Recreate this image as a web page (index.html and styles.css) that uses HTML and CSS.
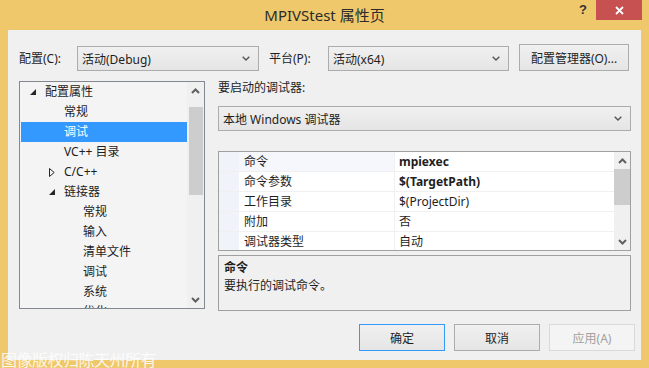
FILE: index.html
```html
<!DOCTYPE html>
<html lang="zh-CN">
<head>
    <meta charset="UTF-8">
    <title>MPIVStest 属性页</title>
    <link rel="stylesheet" href="styles.css">
</head>
<body>
    <div class="window">
        <!-- Title bar -->
        <div class="titlebar">
            <div></div>
            <div class="title">MPIVStest 属性页</div>
            <div class="caption-buttons">
                <span class="help">?</span>
                <span class="close">
                    <svg width="9" height="9" viewBox="0 0 9 9"><path d="M1 1L8 8M8 1L1 8" stroke="#fff" stroke-width="1.8"/></svg>
                </span>
            </div>
        </div>

        <div class="dialog">
            <!-- Configuration row -->
            <div class="config-row">
                <span class="label label-config">配置(C):</span>
                <div class="combo combo-config">
                    <span>活动(Debug)</span>
                    <svg class="chevron" width="8" height="5" viewBox="0 0 8 5"><polyline points="0.7,0.7 4,4 7.3,0.7" fill="none" stroke="#555" stroke-width="1.4"/></svg>
                </div>
                <span class="label label-platform">平台(P):</span>
                <div class="combo combo-platform">
                    <span>活动(x64)</span>
                    <svg class="chevron" width="8" height="5" viewBox="0 0 8 5"><polyline points="0.7,0.7 4,4 7.3,0.7" fill="none" stroke="#555" stroke-width="1.4"/></svg>
                </div>
                <button class="button button-manager">配置管理器(O)...</button>
            </div>

            <div class="main">
                <!-- Tree -->
                <div class="tree">
                    <div class="tree-list">
                        <div class="node level-1">
                            <span class="expander"><svg width="6" height="6" viewBox="0 0 6 6"><polygon points="6,0 6,6 0,6" fill="#262626"/></svg></span>
                            配置属性
                        </div>
                        <div class="node level-2"><span class="expander"></span>常规</div>
                        <div class="node level-2 selected"><span class="expander"></span>调试</div>
                        <div class="node level-2"><span class="expander"></span>VC++ 目录</div>
                        <div class="node level-2">
                            <span class="expander"><svg width="6" height="9" viewBox="0 0 6 9"><polygon points="0.5,0.5 5.2,4.5 0.5,8.5" fill="none" stroke="#262626" stroke-width="1"/></svg></span>
                            C/C++
                        </div>
                        <div class="node level-2">
                            <span class="expander"><svg width="6" height="6" viewBox="0 0 6 6"><polygon points="6,0 6,6 0,6" fill="#262626"/></svg></span>
                            链接器
                        </div>
                        <div class="node level-3"><span class="expander"></span>常规</div>
                        <div class="node level-3"><span class="expander"></span>输入</div>
                        <div class="node level-3"><span class="expander"></span>清单文件</div>
                        <div class="node level-3"><span class="expander"></span>调试</div>
                        <div class="node level-3"><span class="expander"></span>系统</div>
                        <div class="node level-3"><span class="expander"></span>优化</div>
                    </div>
                    <div class="scrollbar tree-scroll">
                        <span class="arrow"><svg width="9" height="6" viewBox="0 0 9 6"><polyline points="1,5 4.5,1.5 8,5" fill="none" stroke="#606060" stroke-width="2"/></svg></span>
                        <span class="thumb tree-thumb"></span>
                        <span class="arrow arrow-down"><svg width="9" height="6" viewBox="0 0 9 6"><polyline points="1,1 4.5,4.5 8,1" fill="none" stroke="#606060" stroke-width="2"/></svg></span>
                    </div>
                </div>

                <!-- Right pane -->
                <div class="pane">
                    <div class="pane-label">要启动的调试器:</div>
                    <div class="combo combo-debugger">
                        <span>本地 Windows 调试器</span>
                        <svg class="chevron" width="8" height="5" viewBox="0 0 8 5"><polyline points="0.7,0.7 4,4 7.3,0.7" fill="none" stroke="#555" stroke-width="1.4"/></svg>
                    </div>

                    <div class="grid">
                        <div class="grid-rows">
                            <div class="prop selected">
                                <span class="gutter"></span>
                                <span class="prop-name">命令</span>
                                <span class="prop-value bold">mpiexec</span>
                            </div>
                            <div class="prop">
                                <span class="gutter"></span>
                                <span class="prop-name">命令参数</span>
                                <span class="prop-value bold">$(TargetPath)</span>
                            </div>
                            <div class="prop">
                                <span class="gutter"></span>
                                <span class="prop-name">工作目录</span>
                                <span class="prop-value">$(ProjectDir)</span>
                            </div>
                            <div class="prop">
                                <span class="gutter"></span>
                                <span class="prop-name">附加</span>
                                <span class="prop-value">否</span>
                            </div>
                            <div class="prop">
                                <span class="gutter"></span>
                                <span class="prop-name">调试器类型</span>
                                <span class="prop-value">自动</span>
                            </div>
                        </div>
                        <div class="scrollbar grid-scroll">
                            <span class="arrow"><svg width="9" height="6" viewBox="0 0 9 6"><polyline points="1,5 4.5,1.5 8,5" fill="none" stroke="#606060" stroke-width="2"/></svg></span>
                            <span class="thumb grid-thumb"></span>
                            <span class="arrow arrow-down"><svg width="9" height="6" viewBox="0 0 9 6"><polyline points="1,1 4.5,4.5 8,1" fill="none" stroke="#606060" stroke-width="2"/></svg></span>
                        </div>
                    </div>

                    <div class="description">
                        <div class="description-title">命令</div>
                        <div>要执行的调试命令。</div>
                    </div>
                </div>
            </div>

            <!-- Dialog buttons -->
            <div class="button-row">
                <button class="button default">确定</button>
                <button class="button">取消</button>
                <button class="button disabled" disabled>应用(A)</button>
            </div>
        </div>

        <div class="watermark">图像版权归陈天州所有</div>
    </div>
</body>
</html>
```

FILE: styles.css
```css
body {
    margin: 0;
    font-family: "Noto Sans", "Noto Sans CJK SC", sans-serif;
    font-size: 12px;
    color: #1e1e1e;
}
.window {
    position: relative;
    width: 649px;
    height: 368px;
    background-color: #efc86b;
    overflow: hidden;
    display: flex;
    flex-direction: column;
}
.titlebar {
    height: 30px;
    flex: none;
    display: grid;
    grid-template-columns: 1fr auto 1fr;
}
.title {
    font-size: 15px;
    line-height: 30px;
    color: #2b2b2b;
}
.caption-buttons {
    display: flex;
    justify-content: flex-end;
    align-items: flex-start;
    padding-right: 7px;
}
.help {
    font-family: "Liberation Sans", sans-serif;
    font-weight: bold;
    font-size: 13px;
    line-height: 20px;
    color: #333;
    margin-right: 9px;
}
.close {
    width: 46px;
    height: 20px;
    background-color: #c75050;
    display: flex;
    justify-content: center;
    align-items: center;
}
.dialog {
    flex: none;
    height: 330px;
    margin: 0 8px;
    background-color: #f0f0f0;
    padding: 14px 0 0 11px;
    box-sizing: border-box;
}
.config-row {
    display: flex;
    align-items: flex-end;
    height: 27px;
}
.label {
    line-height: 25px;
}
.label-config {
    width: 58px;
}
.label-platform {
    width: 59px;
    margin-left: 10px;
}
.combo {
    height: 25px;
    box-sizing: border-box;
    border: 1px solid #acacac;
    background: linear-gradient(#f0f0f0, #e5e5e5);
    display: flex;
    justify-content: space-between;
    align-items: center;
    padding: 0 8px 0 4px;
}
.combo-config {
    width: 182px;
}
.combo-platform {
    width: 181px;
}
.button {
    font-family: inherit;
    font-size: 12px;
    color: #1e1e1e;
    border: 1px solid #acacac;
    background: linear-gradient(#f0f0f0, #e5e5e5);
    padding: 0;
    height: 27px;
    box-sizing: border-box;
}
.button-manager {
    width: 110px;
    margin-left: 10px;
}
.main {
    display: flex;
    margin-top: 10px;
}
.tree {
    width: 186px;
    height: 228px;
    box-sizing: border-box;
    border: 1px solid #828790;
    background-color: #f4f4f4;
    display: flex;
}
.tree-list {
    flex: 1;
    padding-left: 1px;
    overflow: hidden;
}
.node {
    height: 20px;
    line-height: 20px;
    display: flex;
    align-items: center;
    white-space: nowrap;
}
.node.selected {
    background-color: #3399ff;
    color: #fff;
}
.expander {
    width: 15px;
    flex: none;
    display: flex;
    align-items: center;
}
.level-1 { padding-left: 9px; }
.level-2 { padding-left: 28px; }
.level-3 { padding-left: 47px; }
.scrollbar {
    flex: none;
    display: flex;
    flex-direction: column;
    background-color: #f0f0f0;
}
.tree-scroll {
    width: 17px;
}
.arrow {
    height: 17px;
    display: flex;
    justify-content: center;
    align-items: center;
    flex: none;
}
.arrow-down {
    margin-top: auto;
}
.thumb {
    background-color: #cdcdcd;
    margin: 0 1px 0 2px;
}
.tree-thumb {
    margin-top: 8px;
    height: 88px;
}
.pane {
    width: 413px;
    margin-left: 13px;
    display: flex;
    flex-direction: column;
}
.pane-label {
    line-height: 14px;
}
.combo-debugger {
    margin-top: 11px;
}
.grid {
    margin-top: 20px;
    height: 100px;
    box-sizing: border-box;
    border: 1px solid #a0a0a0;
    background-color: #fff;
    display: flex;
}
.grid-rows {
    flex: 1;
    overflow: hidden;
}
.prop {
    display: flex;
    height: 20px;
    line-height: 19px;
    box-sizing: border-box;
    border-bottom: 1px solid #f0f0f0;
}
.gutter {
    width: 20px;
    flex: none;
    background-color: #f0f3fa;
}
.prop-name {
    width: 156px;
    flex: none;
    padding-left: 5px;
    box-sizing: border-box;
    border-right: 1px solid #f0f0f0;
}
.prop.selected .prop-name {
    background-color: #f5f7fc;
}
.prop-value {
    flex: 1;
    padding-left: 4px;
}
.bold {
    font-weight: bold;
}
.grid-scroll {
    width: 16px;
}
.grid-thumb {
    margin: 0;
    height: 36px;
}
.description {
    margin-top: 4px;
    height: 56px;
    box-sizing: border-box;
    border: 1px solid #a0a0a0;
    padding: 3px 5px;
    line-height: 18px;
}
.description-title {
    font-weight: bold;
}
.button-row {
    display: flex;
    justify-content: flex-end;
    gap: 9px;
    margin-top: 13px;
    padding-right: 6px;
}
.button-row .button {
    width: 86px;
}
.button.default {
    border-color: #3399ff;
}
.button.disabled {
    border-color: #d9d9d9;
    background: #f4f4f4;
    color: #a0a0a0;
}
.watermark {
    position: absolute;
    left: 1px;
    top: 349px;
    font-family: "Noto Sans CJK SC", sans-serif;
    font-size: 16px;
    line-height: 20px;
    color: rgba(255, 255, 255, 0.85);
    letter-spacing: -0.5px;
}
```
